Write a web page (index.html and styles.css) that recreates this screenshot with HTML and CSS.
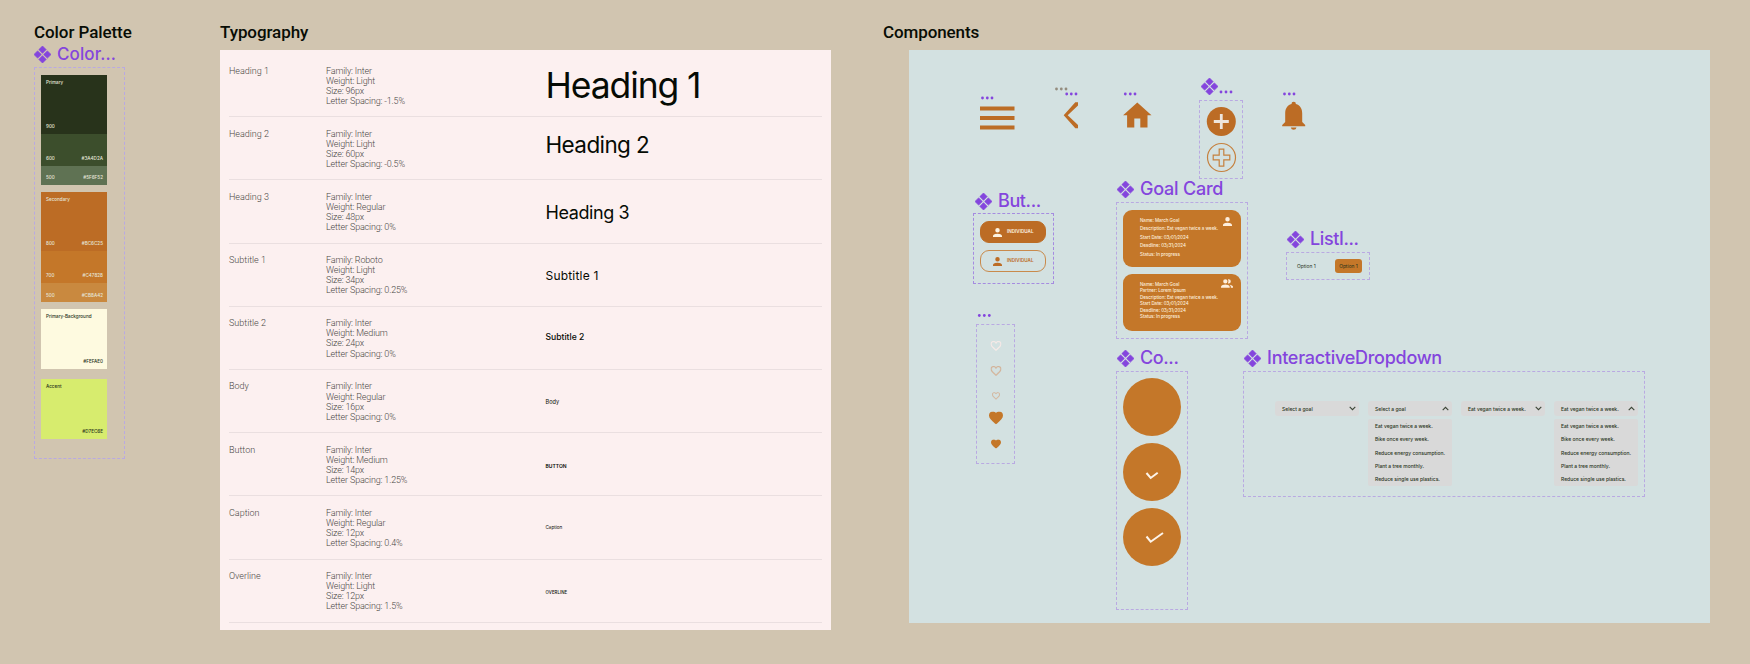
FILE: index.html
```html
<!DOCTYPE html>
<html lang="en">
<head>
<meta charset="utf-8">
<title>Style guide</title>
<link rel="stylesheet" href="styles.css">
</head>
<body>
<svg class="defs" aria-hidden="true">
  <symbol id="diamond" viewBox="0 0 16 16"><path d="M8 0l3.400 3.400L8 6.900 4.600 3.400zM8 9.100l3.400 3.500L8 16l-3.400-3.400zM3.400 4.600L6.900 8l-3.500 3.400L0 8zM12.600 4.600L16 8l-3.400 3.400L9.100 8z" stroke="currentColor" stroke-width=".7" stroke-linejoin="round"/></symbol>
  <symbol id="person" viewBox="4 4 16 16"><path d="M12 12a4 4 0 1 0 0-8 4 4 0 0 0 0 8zm0 2c-2.700 0-8 1.300-8 4v2h16v-2c0-2.700-5.300-4-8-4z"/></symbol>
  <symbol id="people" viewBox="1 4 22 16"><path d="M9 12a4 4 0 1 0 0-8 4 4 0 0 0 0 8zm0 2c-2.700 0-8 1.300-8 4v2h16v-2c0-2.700-5.300-4-8-4zM15 12a4 4 0 0 0 0-8c-.5 0-.9.100-1.300.2a7 7 0 0 1 0 7.600c.4.100.8.200 1.300.2zM16.700 14.100c1.400 1 2.300 2.300 2.300 3.900v2h4v-2c0-2.200-3.500-3.500-6.300-3.900z"/></symbol>
  <symbol id="heart" viewBox="2 3 20 18.400"><path d="M12 21.300l-1.500-1.300C5.400 15.400 2 12.300 2 8.500 2 5.400 4.400 3 7.500 3c1.700 0 3.400.8 4.500 2.100C13.100 3.800 14.800 3 16.500 3 19.600 3 22 5.400 22 8.500c0 3.800-3.400 6.900-8.500 11.500z"/></symbol>
  <symbol id="heart-line" viewBox="2 3 20 18.400"><path d="M16.500 3c-1.700 0-3.400.8-4.500 2.100C10.900 3.800 9.200 3 7.500 3 4.400 3 2 5.400 2 8.500c0 3.800 3.400 6.900 8.600 11.500l1.400 1.300 1.500-1.300C18.600 15.400 22 12.300 22 8.500 22 5.400 19.600 3 16.500 3zm-4.400 15.600l-.1.100-.1-.1C7.100 14.200 4 11.400 4 8.500 4 6.500 5.500 5 7.500 5c1.500 0 3 1 3.600 2.400h1.800C13.500 6 15 5 16.500 5c2 0 3.500 1.500 3.500 3.500 0 2.900-3.100 5.700-7.900 10.100z" stroke="currentColor" stroke-width=".4"/></symbol>
  <symbol id="chev" viewBox="0 0 7 5"><path d="M.7.800l2.800 2.900L6.300.800" fill="none" stroke="#3c4536" stroke-width="1.100"/></symbol>
</svg>
<main class="board">
  <section class="palette">
    <h2 class="title">Color Palette</h2>
    <div class="tag palette-tag"><svg><use href="#diamond"/></svg><span>Color...</span></div>
    <div class="palette-frame">
      <div class="swatch">
        <div class="shade p900"><span>Primary</span><p><span>900</span></p></div>
        <div class="shade p700"><p><span>600</span><span>#3A4D2A</span></p></div>
        <div class="shade p500"><p><span>500</span><span>#5F6F52</span></p></div>
      </div>
      <div class="swatch">
        <div class="shade s800"><span>Secondary</span><p><span>800</span><span>#BC6C25</span></p></div>
        <div class="shade s700"><p><span>700</span><span>#C47828</span></p></div>
        <div class="shade s500"><p><span>500</span><span>#CB8A42</span></p></div>
      </div>
      <div class="swatch single cream"><span>Primary-Background</span><p><span>#FEFAE0</span></p></div>
      <div class="swatch single lime"><span>Accent</span><p><span>#D7EC6E</span></p></div>
    </div>
  </section>

  <section class="typo">
    <h2 class="title">Typography</h2>
    <div class="typo-panel">
      <div class="row"><span>Heading 1</span><p>Family: Inter<br>Weight: Light<br>Size: 96px<br>Letter Spacing: -1.5%</p><b class="h1">Heading 1</b></div>
      <div class="row"><span>Heading 2</span><p>Family: Inter<br>Weight: Light<br>Size: 60px<br>Letter Spacing: -0.5%</p><b class="h2">Heading 2</b></div>
      <div class="row"><span>Heading 3</span><p>Family: Inter<br>Weight: Regular<br>Size: 48px<br>Letter Spacing: 0%</p><b class="h3">Heading 3</b></div>
      <div class="row"><span>Subtitle 1</span><p>Family: Roboto<br>Weight: Light<br>Size: 34px<br>Letter Spacing: 0.25%</p><b class="s1">Subtitle 1</b></div>
      <div class="row"><span>Subtitle 2</span><p>Family: Inter<br>Weight: Medium<br>Size: 24px<br>Letter Spacing: 0%</p><b class="s2">Subtitle 2</b></div>
      <div class="row"><span>Body</span><p>Family: Inter<br>Weight: Regular<br>Size: 16px<br>Letter Spacing: 0%</p><b class="bd">Body</b></div>
      <div class="row"><span>Button</span><p>Family: Inter<br>Weight: Medium<br>Size: 14px<br>Letter Spacing: 1.25%</p><b class="bt">BUTTON</b></div>
      <div class="row"><span>Caption</span><p>Family: Inter<br>Weight: Regular<br>Size: 12px<br>Letter Spacing: 0.4%</p><b class="cp">Caption</b></div>
      <div class="row"><span>Overline</span><p>Family: Inter<br>Weight: Light<br>Size: 12px<br>Letter Spacing: 1.5%</p><b class="ov">OVERLINE</b></div>
    </div>
  </section>

  <section class="comps">
    <h2 class="title">Components</h2>
    <div class="canvas">
      <svg class="node icons" viewBox="0 0 801 573">
        <g fill="#8445dd">
          <circle cx="73.500" cy="48" r="1.400"/><circle cx="78.300" cy="48" r="1.400"/><circle cx="83" cy="48" r="1.400"/>
          <circle cx="157.700" cy="44" r="1.400"/><circle cx="162.300" cy="44" r="1.400"/><circle cx="167" cy="44" r="1.400"/>
          <circle cx="216.300" cy="44" r="1.400"/><circle cx="221.300" cy="44" r="1.400"/><circle cx="226" cy="44" r="1.400"/>
          <circle cx="312" cy="42" r="1.400"/><circle cx="317" cy="42" r="1.400"/><circle cx="322" cy="42" r="1.400"/>
          <circle cx="375.500" cy="44" r="1.400"/><circle cx="380.300" cy="44" r="1.400"/><circle cx="385" cy="44" r="1.400"/>
          <circle cx="70.300" cy="265.500" r="1.400"/><circle cx="75.300" cy="265.500" r="1.400"/><circle cx="80.300" cy="265.500" r="1.400"/>
        </g>
        <g fill="#948c7e"><circle cx="147.500" cy="39" r="1.400"/><circle cx="152.300" cy="39" r="1.400"/><circle cx="157" cy="39" r="1.400"/></g>
        <g fill="#bc6c25">
          <path d="M71 56.500h34.500v4H71zM71 66h34.500v4H71zM71 75.500h34.500v4H71z"/>
          <path d="M166.300 52.300h2.700v3.200L158.700 65.200 169 75v3.200h-2.700L154.700 65.200z"/>
          <path d="M228.300 52.500l14.200 12.800h-4v12.200h-7.200v-9h-6v9h-7.200V65.300h-4z"/>
          <path d="M384.700 51.800a2.200 2.200 0 0 1 2.200 2.300c4.300 1.200 6.300 4.800 6.300 9.300v8.600l3 3v1.300h-23V75l3-3v-8.600c0-4.500 2-8.100 6.300-9.300a2.200 2.200 0 0 1 2.200-2.300zM381.800 77.500h5.700a2.900 2.900 0 0 1-5.700 0z"/>
          <circle cx="312.300" cy="71.500" r="14.500"/>
        </g>
        <path d="M304.800 71.500h15M312.300 64v15" stroke="#eee5dc" stroke-width="2.800"/>
        <g fill="none" stroke="#c5813f" stroke-width="1.200">
          <circle cx="312.500" cy="107.500" r="14"/>
          <path d="M310.200 99.200h4.600v6h6v4.600h-6v6.300h-4.600v-6.300h-6v-4.600h6z"/>
        </g>
      </svg>
      <div class="node tag t-plus"><svg><use href="#diamond"/></svg></div>
      <div class="node frame f-plus"></div>

      <div class="node tag t-but"><svg><use href="#diamond"/></svg><span>But...</span></div>
      <div class="node frame f-but">
        <div class="btn solid"><svg><use href="#person"/></svg><span>INDIVIDUAL</span></div>
        <div class="btn line"><svg><use href="#person"/></svg><span>INDIVIDUAL</span></div>
      </div>

      <div class="node frame f-hearts">
        <svg class="hl pale"><use href="#heart-line"/></svg>
        <svg class="hl tan"><use href="#heart-line"/></svg>
        <svg class="hs tan"><use href="#heart-line"/></svg>
        <svg class="hb"><use href="#heart"/></svg>
        <svg class="hm"><use href="#heart"/></svg>
      </div>

      <div class="node tag t-goal"><svg><use href="#diamond"/></svg><span>Goal Card</span></div>
      <div class="node frame f-goal">
        <div class="card one"><p>Name: March Goal<br>Description: Eat vegan twice a week.<br>Start Date: 03/01/2024<br>Deadline: 03/31/2024<br>Status: In progress</p><svg class="ic"><use href="#person"/></svg></div>
        <div class="card two"><p>Name: March Goal<br>Partner: Lorem Ipsum<br>Description: Eat vegan twice a week.<br>Start Date: 03/01/2024<br>Deadline: 03/31/2024<br>Status: In progress</p><svg class="ic wide"><use href="#people"/></svg></div>
      </div>

      <div class="node tag t-list"><svg><use href="#diamond"/></svg><span>ListI...</span></div>
      <div class="node frame f-list"><span>Option 1</span><span class="on">Option 1</span></div>

      <div class="node tag t-co"><svg><use href="#diamond"/></svg><span>Co...</span></div>
      <div class="node frame f-co">
        <svg viewBox="0 0 58 58"><circle cx="29" cy="29" r="29"/></svg>
        <svg viewBox="0 0 58 58"><circle cx="29" cy="29" r="29"/><path d="M23.500 30l4.200 5 7-5.200"/></svg>
        <svg viewBox="0 0 58 58"><circle cx="29" cy="29" r="29"/><path d="M23.500 28.500l4.200 5.200L40 25"/></svg>
      </div>

      <div class="node tag t-drop"><svg><use href="#diamond"/></svg><span>InteractiveDropdown</span></div>
      <div class="node frame f-drop">
        <div class="dd"><div class="head"><span>Select a goal</span><svg><use href="#chev"/></svg></div></div>
        <div class="dd open"><div class="head"><span>Select a goal</span><svg><use href="#chev"/></svg></div>
          <ul><li>Eat vegan twice a week.</li><li>Bike once every week.</li><li>Reduce energy consumption.</li><li>Plant a tree monthly.</li><li>Reduce single use plastics.</li></ul></div>
        <div class="dd"><div class="head"><span>Eat vegan twice a week.</span><svg><use href="#chev"/></svg></div></div>
        <div class="dd open"><div class="head"><span>Eat vegan twice a week.</span><svg><use href="#chev"/></svg></div>
          <ul><li>Eat vegan twice a week.</li><li>Bike once every week.</li><li>Reduce energy consumption.</li><li>Plant a tree monthly.</li><li>Reduce single use plastics.</li></ul></div>
      </div>
    </div>
  </section>
</main>
</body>
</html>
```

FILE: styles.css
```css
* { box-sizing: border-box; }
body { margin: 0; background: #d1c5b0; font-family: Inter, sans-serif; }
p, ul, h2 { margin: 0; padding: 0; }
ul { list-style: none; }
svg { display: block; fill: currentColor; }
.defs { display: none; }
.board { display: flex; align-items: flex-start; width: 1750px; height: 664px; padding-top: 22px; overflow: hidden; }
.title { font: 500 17px/21px Roboto, sans-serif; letter-spacing: -.08px; color: #080d05; white-space: nowrap; height: 28px; }
.tag { display: flex; align-items: center; gap: 6px; height: 20px; font-size: 18px; letter-spacing: -.22px; font-weight: 500; line-height: 20px; color: #8445dd; white-space: nowrap; }
.tag svg { width: 17px; height: 17px; flex: none; overflow: visible; }
.frame, .palette-frame { border: 1px dashed #b9a9e2; }

.palette { width: 91px; margin-left: 34px; }
.palette .title { height: 23px; }
.palette-tag { height: 18px; margin-bottom: 4px; font-size: 17px; letter-spacing: .1px; }
.palette-frame { height: 392px; padding: 6.500px 6px; }
.swatch { width: 66px; margin-bottom: 7px; color: #e6e6da; font: 500 4.600px/6px Inter, sans-serif; }
.swatch p { display: flex; justify-content: space-between; }
.shade { display: flex; flex-direction: column; justify-content: space-between; padding: 5px 4px 4px 5px; }
.p900 { height: 59px; background: #28331b; }
.p700 { height: 32px; background: #3c4e2c; justify-content: flex-end; padding-bottom: 4px; }
.p500 { height: 19px; background: #5f7253; justify-content: flex-end; }
.s800 { height: 59px; background: #bc6c25; }
.s700 { height: 32px; background: #c47729; justify-content: flex-end; }
.s500 { height: 19px; background: #c9893f; justify-content: flex-end; padding-bottom: 3px; }
.single { height: 60px; display: flex; flex-direction: column; justify-content: space-between; padding: 5px 4px 4px 5px; color: #28331b; }
.single p { justify-content: flex-end; }
.cream { background: #fefae0; margin-bottom: 10px; }
.lime { background: #d7ec6e; }

.typo { width: 611px; margin-left: 95px; }
.typo-panel { height: 580px; background: #fcf0f0; padding: 4px 9px 0; }
.row { display: grid; grid-template-columns: 97px 219.500px 1fr; height: 63.200px; padding-top: 11.500px; border-bottom: 1px solid #eadfe0; font: 300 9px/10.100px Roboto, sans-serif; letter-spacing: -.16px; color: #4a4845; }
.row > span { letter-spacing: 0; }
.row b { height: 40px; font-family: Inter, sans-serif; font-weight: 400; letter-spacing: 0; color: #060b04; white-space: nowrap; line-height: 40px; }
.row .h1 { font-size: 35.500px; letter-spacing: -1.100px; }
.row .h2 { font-size: 22.500px; letter-spacing: -.6px; margin-top: -4px; }
.row .h3 { font-size: 18px; letter-spacing: -.4px; margin-top: 1px; }
.row .s1 { font-size: 12px; letter-spacing: .2px; margin-top: 1px; }
.row .s2 { font-size: 8.600px; font-weight: 500; margin-top: -1px; }
.row .bd { font-size: 5.600px; margin-top: 1px; }
.row .bt { font-size: 5px; font-weight: 600; margin-top: 1px; }
.cp { font-size: 4.600px; }
.row .ov { font-size: 4.300px; font-weight: 500; letter-spacing: .1px; margin-top: 2px; }

.comps { width: 827px; margin-left: 52px; }
.comps .title { letter-spacing: -.1px; }
.canvas { position: relative; width: 801px; height: 573px; margin-left: 26px; background: #d3e1e1; }
.node { position: absolute; }
.icons { left: 0; top: 0; width: 801px; height: 573px; }
.t-plus { left: 292px; top: 26px; }
.f-plus { left: 290px; top: 50px; width: 44px; height: 79px; }
.t-but { left: 66px; top: 141px; letter-spacing: -.4px; }
.f-but { left: 64px; top: 163px; width: 81px; height: 71px; padding: 7px 6px; border-color: #a58be0; }
.btn { display: flex; align-items: center; gap: 5px; width: 66px; height: 22px; margin-bottom: 7px; padding-left: 12px; border-radius: 9px; border: 1px solid #c98a4c; color: #bc6c25; font-size: 4.600px; font-weight: 600; line-height: 6px; }
.btn svg { width: 9px; height: 9px; }
.solid { background: #bc6c25; border-color: #bc6c25; color: #fdf3e2; }
.f-hearts { left: 67px; top: 273.500px; width: 39px; height: 140px; color: #c47729; }
.f-hearts svg { position: absolute; left: 18.500px; transform: translate(-50%, -50%); overflow: visible; }
.f-hearts .pale { color: #f8ebe9; }
.f-hearts .tan { color: #d5b59b; }
.f-hearts .hl { width: 11px; height: 10px; }
.f-hearts .hs { width: 8px; height: 8px; top: 71px; }
.f-hearts .hb { width: 14px; height: 13px; top: 93px; }
.f-hearts .hm { width: 10px; height: 9.500px; top: 119px; }
.f-hearts .hl:nth-child(1) { top: 21px; }
.f-hearts .hl:nth-child(2) { top: 46px; }
.t-goal { left: 208px; top: 129px; }
.f-goal { left: 207px; top: 152px; width: 132px; height: 137px; padding: 6.500px 6px; }
.card { display: flex; justify-content: space-between; width: 118px; height: 57px; margin-bottom: 7px; padding: 7px 9px 0 17px; border-radius: 9px; background: #c47729; color: #fdeedd; font-size: 4.500px; font-weight: 500; line-height: 8.500px; white-space: nowrap; letter-spacing: -.03px; }
.card.two { line-height: 6.500px; padding-top: 8px; }
.card .ic { width: 9px; height: 9px; flex: none; }
.card .wide { width: 12px; margin-right: -1px; margin-top: -3px; }
.t-list { left: 378px; top: 179px; letter-spacing: -.4px; }
.f-list { left: 377px; top: 202px; width: 84px; height: 28px; display: flex; align-items: center; padding-left: 10px; font-size: 4.900px; color: #28331b; }
.f-list span { width: 38px; }
.f-list .on { width: 27px; height: 14px; border-radius: 3px; background: #c47729; line-height: 14px; text-align: center; }
.t-co { left: 208px; top: 298px; letter-spacing: -.4px; }
.f-co { left: 207px; top: 321px; width: 72px; height: 239px; padding: 6px; }
.f-co svg { width: 58px; height: 58px; margin-bottom: 7px; }
.f-co circle { fill: #c47729; }
.f-co path { fill: none; stroke: #fdf4ea; stroke-width: 2; }
.t-drop { left: 335px; top: 298px; letter-spacing: -.27px; }
.f-drop { left: 334px; top: 321px; width: 402px; height: 126px; display: flex; align-items: flex-start; gap: 9px; padding: 29px 0 0 31px; }
.dd { width: 84px; font-size: 5px; font-weight: 500; color: #28331b; white-space: nowrap; }
.head { display: flex; align-items: center; justify-content: space-between; height: 15px; padding: 0 3px 0 7px; border-radius: 3px; background: #d9d9d9; }
.head svg { width: 7px; height: 5px; }
.open .head svg { transform: scaleY(-1); }
.dd ul { margin-top: 3px; height: 67px; padding: 1px 0 0 7px; background: #d9d9d9; border-radius: 2px; }
.dd li { height: 13.300px; line-height: 13.300px; }
```
